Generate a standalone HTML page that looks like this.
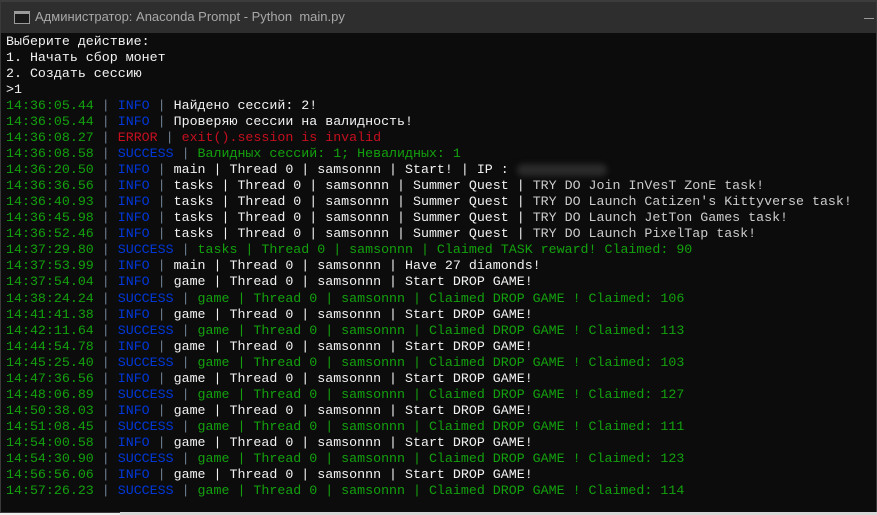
<!DOCTYPE html>
<html><head><meta charset="utf-8"><style>
html,body{margin:0;padding:0;width:877px;height:515px;overflow:hidden;background:#f0f0f0}
.win{position:absolute;left:0;top:0;width:875px;height:512px;background:#0c0c0c;border:1px solid #3a3a3a;border-top:none}
.tb{position:absolute;left:0;top:0;width:875px;height:33px;background:#2e2e2e;border-top:2px solid #3c3c3c;box-sizing:border-box}
.tb .t{position:absolute;left:34px;top:7px;font:13px "Liberation Sans",sans-serif;color:#a8a8a8}
.ic{position:absolute;left:13px;top:9px;width:14px;height:11px;border:1px solid #9a9a9a;background:#1a1a1a}
.ic:before{content:"";position:absolute;left:0;top:0;right:0;height:2px;background:#9a9a9a}
.min{position:absolute;left:863px;top:16px;width:10px;height:1px;background:#999}
.con{position:absolute;left:5px;top:34px;font:13.3px/16.03px "Liberation Mono","DejaVu Sans Mono",monospace;color:#cccccc;white-space:pre;letter-spacing:0}
.g{color:#13a10e}.b{color:#0037da}.r{color:#c50f1f}.s{color:#6f7f92}.w{color:#f2f2f2}.l{color:#cccccc}
.blur{display:inline-block;width:90px;height:12px;background:#2a2a2a;border-radius:6px;filter:blur(3px);vertical-align:middle}
.bot{position:absolute;left:120px;top:512px;width:757px;height:3px;background:#d8d8d8}
</style></head><body>
<div class="win">
<div class="tb"><div class="ic"></div><div class="t">Администратор: Anaconda Prompt - Python&nbsp; main.py</div><div class="min"></div></div>
<div class="con"><span class="w">Выберите действие:
1. Начать сбор монет
2. Создать сессию
&gt;1</span>
<span class="g">14:36:05.44</span> <span class="s">|</span> <span class="b">INFO</span> <span class="s">|</span> <span class="w">Найдено сессий: 2!</span>
<span class="g">14:36:05.44</span> <span class="s">|</span> <span class="b">INFO</span> <span class="s">|</span> <span class="w">Проверяю сессии на валидность!</span>
<span class="g">14:36:08.27</span> <span class="s">|</span> <span class="r">ERROR</span> <span class="s">|</span> <span class="r">exit().session is invalid</span>
<span class="g">14:36:08.58</span> <span class="s">|</span> <span class="b">SUCCESS</span> <span class="s">|</span> <span class="g">Валидных сессий: 1; Невалидных: 1</span>
<span class="g">14:36:20.50</span> <span class="s">|</span> <span class="b">INFO</span> <span class="s">|</span> <span class="w">main | Thread 0 | samsonnn | Start! | IP : </span><span class="blur"></span>
<span class="g">14:36:36.56</span> <span class="s">|</span> <span class="b">INFO</span> <span class="s">|</span> <span class="w">tasks | Thread 0 | samsonnn | Summer Quest | </span><span class="l">TRY DO Join InVesT ZonE task!</span>
<span class="g">14:36:40.93</span> <span class="s">|</span> <span class="b">INFO</span> <span class="s">|</span> <span class="w">tasks | Thread 0 | samsonnn | Summer Quest | </span><span class="l">TRY DO Launch Catizen's Kittyverse task!</span>
<span class="g">14:36:45.98</span> <span class="s">|</span> <span class="b">INFO</span> <span class="s">|</span> <span class="w">tasks | Thread 0 | samsonnn | Summer Quest | </span><span class="l">TRY DO Launch JetTon Games task!</span>
<span class="g">14:36:52.46</span> <span class="s">|</span> <span class="b">INFO</span> <span class="s">|</span> <span class="w">tasks | Thread 0 | samsonnn | Summer Quest | </span><span class="l">TRY DO Launch PixelTap task!</span>
<span class="g">14:37:29.80</span> <span class="s">|</span> <span class="b">SUCCESS</span> <span class="s">|</span> <span class="g">tasks | Thread 0 | samsonnn | Claimed TASK reward! Claimed: 90</span>
<span class="g">14:37:53.99</span> <span class="s">|</span> <span class="b">INFO</span> <span class="s">|</span> <span class="w">main | Thread 0 | samsonnn | Have 27 diamonds!</span>
<span class="g">14:37:54.04</span> <span class="s">|</span> <span class="b">INFO</span> <span class="s">|</span> <span class="w">game | Thread 0 | samsonnn | Start DROP GAME!</span>
<span class="g">14:38:24.24</span> <span class="s">|</span> <span class="b">SUCCESS</span> <span class="s">|</span> <span class="g">game | Thread 0 | samsonnn | Claimed DROP GAME ! Claimed: 106</span>
<span class="g">14:41:41.38</span> <span class="s">|</span> <span class="b">INFO</span> <span class="s">|</span> <span class="w">game | Thread 0 | samsonnn | Start DROP GAME!</span>
<span class="g">14:42:11.64</span> <span class="s">|</span> <span class="b">SUCCESS</span> <span class="s">|</span> <span class="g">game | Thread 0 | samsonnn | Claimed DROP GAME ! Claimed: 113</span>
<span class="g">14:44:54.78</span> <span class="s">|</span> <span class="b">INFO</span> <span class="s">|</span> <span class="w">game | Thread 0 | samsonnn | Start DROP GAME!</span>
<span class="g">14:45:25.40</span> <span class="s">|</span> <span class="b">SUCCESS</span> <span class="s">|</span> <span class="g">game | Thread 0 | samsonnn | Claimed DROP GAME ! Claimed: 103</span>
<span class="g">14:47:36.56</span> <span class="s">|</span> <span class="b">INFO</span> <span class="s">|</span> <span class="w">game | Thread 0 | samsonnn | Start DROP GAME!</span>
<span class="g">14:48:06.89</span> <span class="s">|</span> <span class="b">SUCCESS</span> <span class="s">|</span> <span class="g">game | Thread 0 | samsonnn | Claimed DROP GAME ! Claimed: 127</span>
<span class="g">14:50:38.03</span> <span class="s">|</span> <span class="b">INFO</span> <span class="s">|</span> <span class="w">game | Thread 0 | samsonnn | Start DROP GAME!</span>
<span class="g">14:51:08.45</span> <span class="s">|</span> <span class="b">SUCCESS</span> <span class="s">|</span> <span class="g">game | Thread 0 | samsonnn | Claimed DROP GAME ! Claimed: 111</span>
<span class="g">14:54:00.58</span> <span class="s">|</span> <span class="b">INFO</span> <span class="s">|</span> <span class="w">game | Thread 0 | samsonnn | Start DROP GAME!</span>
<span class="g">14:54:30.90</span> <span class="s">|</span> <span class="b">SUCCESS</span> <span class="s">|</span> <span class="g">game | Thread 0 | samsonnn | Claimed DROP GAME ! Claimed: 123</span>
<span class="g">14:56:56.06</span> <span class="s">|</span> <span class="b">INFO</span> <span class="s">|</span> <span class="w">game | Thread 0 | samsonnn | Start DROP GAME!</span>
<span class="g">14:57:26.23</span> <span class="s">|</span> <span class="b">SUCCESS</span> <span class="s">|</span> <span class="g">game | Thread 0 | samsonnn | Claimed DROP GAME ! Claimed: 114</span></div>
</div>
<div class="bot"></div>
</body></html>
